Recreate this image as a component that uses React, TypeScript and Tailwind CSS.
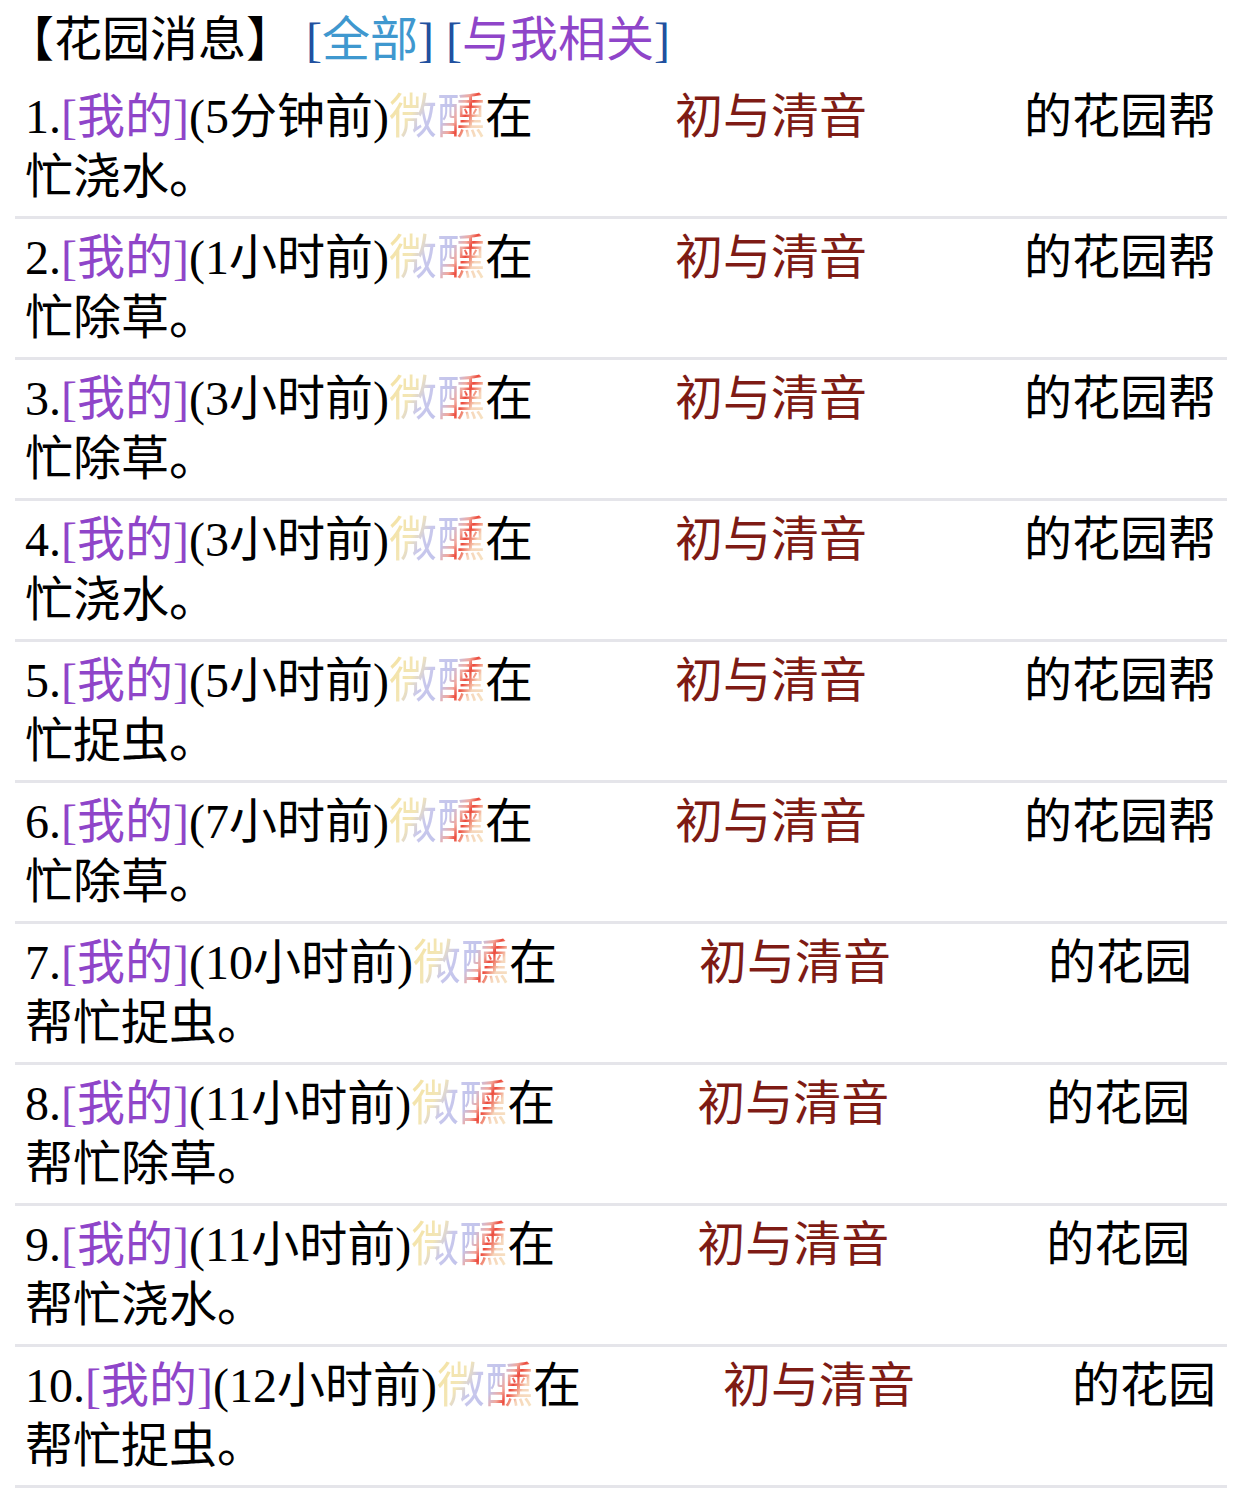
import React from "react";

const rows = [
  { n: 1, t: "5分钟前", tail: "的花园帮忙浇水。" },
  { n: 2, t: "1小时前", tail: "的花园帮忙除草。" },
  { n: 3, t: "3小时前", tail: "的花园帮忙除草。" },
  { n: 4, t: "3小时前", tail: "的花园帮忙浇水。" },
  { n: 5, t: "5小时前", tail: "的花园帮忙捉虫。" },
  { n: 6, t: "7小时前", tail: "的花园帮忙除草。" },
  { n: 7, t: "10小时前", tail: "的花园帮忙捉虫。" },
  { n: 8, t: "11小时前", tail: "的花园帮忙除草。" },
  { n: 9, t: "11小时前", tail: "的花园帮忙浇水。" },
  { n: 10, t: "12小时前", tail: "的花园帮忙捉虫。" },
];

export default function App() {
  return (
    <div className="w-[1242px] bg-white text-black text-[48px] leading-[60px] font-['Liberation_Serif','Noto_Sans_CJK_SC',serif]">
      <div className="pl-[6px] pr-[25px] pt-[5px] pb-[8px]">
        <span className="font-['Noto_Sans_CJK_SC',sans-serif]">【花园消息】</span>{" "}
        <span className="text-[#21509f]">[</span>
        <span className="text-[#3f98cf] font-['Noto_Sans_CJK_SC',sans-serif]">全部</span>
        <span className="text-[#21509f]">]</span>{" "}
        <span className="text-[#21509f]">[</span>
        <span className="text-[#8f45c9] font-['Noto_Sans_CJK_SC',sans-serif]">与我相关</span>
        <span className="text-[#21509f]">]</span>
      </div>
      {rows.map((r) => (
        <div
          key={r.n}
          className="mx-[15px] px-[10px] py-[9px] border-b-[3px] border-[#e5e5ea]"
        >
          <span>{r.n}.</span>
          <span className="text-[#8f45c9]">[我的]</span>
          <span>({r.t})</span>
          <span className="bg-[linear-gradient(120deg,#f4e2a2_0%,#f3e6b6_28%,#c9c8ec_40%,#c2c4ec_56%,#f2a89c_66%,#ec4a3c_72%,#f6d6bc_82%,#f7e6c4_100%)] bg-clip-text text-transparent">
            微醺
          </span>
          <span>在</span>
          <span className="ml-[142px] text-[#7e1b14]">初与清音</span>
          <span className="ml-[157px]">{r.tail}</span>
        </div>
      ))}
    </div>
  );
}
